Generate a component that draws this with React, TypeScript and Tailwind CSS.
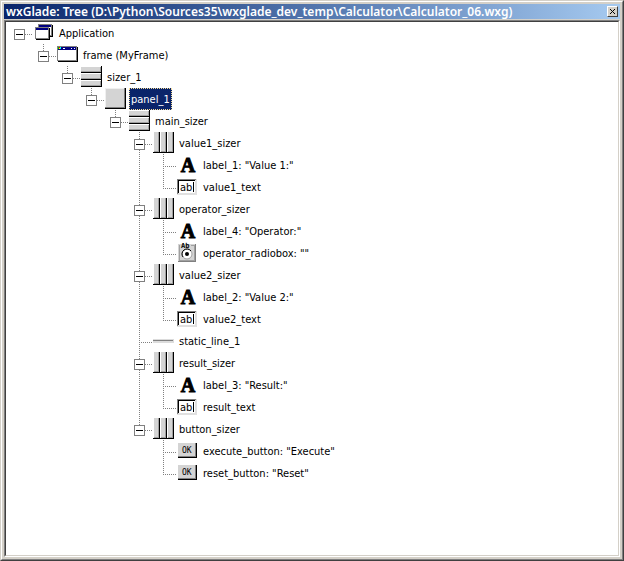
import type { ReactNode } from "react";

type IconKind =
  | "app"
  | "frame"
  | "vsizer"
  | "hsizer"
  | "panel"
  | "label"
  | "text"
  | "radio"
  | "line"
  | "button";

interface TreeNode {
  name: string;
  icon: IconKind;
  selected?: boolean;
  children?: TreeNode[];
}

const tree: TreeNode = {
  name: "Application",
  icon: "app",
  children: [
    {
      name: "frame (MyFrame)",
      icon: "frame",
      children: [
        {
          name: "sizer_1",
          icon: "vsizer",
          children: [
            {
              name: "panel_1",
              icon: "panel",
              selected: true,
              children: [
                {
                  name: "main_sizer",
                  icon: "vsizer",
                  children: [
                    {
                      name: "value1_sizer",
                      icon: "hsizer",
                      children: [
                        { name: 'label_1: "Value 1:"', icon: "label" },
                        { name: "value1_text", icon: "text" },
                      ],
                    },
                    {
                      name: "operator_sizer",
                      icon: "hsizer",
                      children: [
                        { name: 'label_4: "Operator:"', icon: "label" },
                        { name: 'operator_radiobox: ""', icon: "radio" },
                      ],
                    },
                    {
                      name: "value2_sizer",
                      icon: "hsizer",
                      children: [
                        { name: 'label_2: "Value 2:"', icon: "label" },
                        { name: "value2_text", icon: "text" },
                      ],
                    },
                    { name: "static_line_1", icon: "line" },
                    {
                      name: "result_sizer",
                      icon: "hsizer",
                      children: [
                        { name: 'label_3: "Result:"', icon: "label" },
                        { name: "result_text", icon: "text" },
                      ],
                    },
                    {
                      name: "button_sizer",
                      icon: "hsizer",
                      children: [
                        { name: 'execute_button: "Execute"', icon: "button" },
                        { name: 'reset_button: "Reset"', icon: "button" },
                      ],
                    },
                  ],
                },
              ],
            },
          ],
        },
      ],
    },
  ],
};

function MiniWindow({ x, y }: { x: number; y: number }) {
  return (
    <g transform={`translate(${x} ${y})`}>
      <rect x="1" y="1" width="14" height="12" fill="#000" />
      <rect width="14" height="12" fill="#808080" />
      <rect x="1" y="1" width="12" height="10" fill="#fff" />
      <rect x="1" y="1" width="12" height="2" fill="#000080" />
    </g>
  );
}

const drawings: Record<IconKind, ReactNode> = {
  app: (
    <>
      <MiniWindow x={5} y={2} />
      <MiniWindow x={2} y={5} />
    </>
  ),
  frame: (
    <>
      <rect x="1" y="3" width="20" height="15" fill="#000" />
      <rect x="0" y="2" width="20" height="15" fill="#808080" />
      <rect x="1" y="3" width="18" height="13" fill="#fff" />
      <rect x="1" y="3" width="18" height="3" fill="#000080" />
      <rect x="1" y="3" width="1" height="2" fill="#00c000" />
      <rect x="2" y="3" width="1" height="1" fill="#ff0000" />
      <rect x="2" y="4" width="1" height="1" fill="#ffff00" />
      <rect x="3" y="3" width="1" height="2" fill="#00ffff" />
      <rect x="6" y="4" width="2" height="1" fill="#fff" />
      <rect x="14" y="4" width="1" height="1" fill="#fff" />
      <rect x="17" y="4" width="1" height="1" fill="#fff" />
    </>
  ),
  vsizer: (
    <>
      {[0, 7, 14].map((y) => (
        <g key={y} transform={`translate(0 ${y})`}>
          <rect width="21" height="7" fill="#000" />
          <rect width="20" height="6" fill="#a0a0a0" />
          <rect width="19" height="5" fill="#d4d4d4" />
          <rect width="20" height="1" fill="#fff" />
        </g>
      ))}
    </>
  ),
  hsizer: (
    <>
      {[0, 7, 14].map((x) => (
        <g key={x} transform={`translate(${x} 0)`}>
          <rect width="7" height="21" fill="#000" />
          <rect width="6" height="20" fill="#a0a0a0" />
          <rect width="5" height="19" fill="#d4d4d4" />
          <rect width="1" height="20" fill="#fff" />
        </g>
      ))}
    </>
  ),
  panel: (
    <>
      <rect width="21" height="21" fill="#000" />
      <rect width="20" height="20" fill="#808080" />
      <rect width="19" height="19" fill="#f0f0f0" />
      <rect x="1" y="1" width="18" height="18" fill="#d4d4d4" />
    </>
  ),
  label: (
    <text
      x="11"
      y="18"
      textAnchor="middle"
      stroke="#000"
      strokeWidth="1"
      className="font-['Liberation_Serif',serif] text-[20px] font-bold"
    >
      A
    </text>
  ),
  text: (
    <>
      <rect x="0" y="3" width="20" height="16" fill="#e0e0e0" />
      <path d="M0 18V3h19v1H1v14z" fill="#808080" />
      <rect x="1" y="4" width="17" height="13" fill="#000" />
      <rect x="2" y="5" width="16" height="12" fill="#fff" />
      <text x="3" y="15" className="font-['DejaVu_Sans_Condensed','DejaVu_Sans',sans-serif] text-[11px]">
        ab
      </text>
      <rect x="16" y="6" width="1" height="10" fill="#000" />
    </>
  ),
  radio: (
    <>
      <rect x="1" y="2" width="18" height="18" fill="#808080" />
      <rect x="1" y="2" width="17" height="17" fill="#d4d4d4" />
      <path d="M3 3H2v15h15V3h-3" fill="none" stroke="#a0a0a0" />
      <text x="4" y="6" className="font-['DejaVu_Sans_Mono',monospace] text-[7px] font-bold">
        Ab
      </text>
      <g shapeRendering="auto">
        <circle cx="10" cy="12" r="5" fill="#fff" stroke="#a0a0a0" />
        <path d="M6 15A5 5 0 0 1 14 9" fill="none" stroke="#000" />
        <circle cx="10" cy="12" r="2" fill="#000" />
      </g>
    </>
  ),
  line: (
    <>
      <rect y="9" width="21" height="4" fill="#dcdcdc" />
      <rect y="10" width="20" height="1" fill="#808080" />
    </>
  ),
  button: (
    <>
      <rect x="1" y="3" width="19" height="15" fill="#000" />
      <rect x="1" y="3" width="18" height="14" fill="#808080" />
      <rect x="1" y="3" width="17" height="13" fill="#d4d4d4" />
      <text x="5" y="13" className="font-['DejaVu_Sans_Mono',monospace] text-[8px]">
        OK
      </text>
    </>
  ),
};

function Guide({ d, className }: { d: string; className: string }) {
  return (
    <svg
      aria-hidden="true"
      className={`h-[22px] shrink-0 ${className}`}
      fill="none"
      stroke="#808080"
      strokeDasharray="1 1"
      shapeRendering="crispEdges"
    >
      <path d={d} />
    </svg>
  );
}

interface ItemProps {
  node: TreeNode;
  trail: boolean[];
  last: boolean;
}

function TreeItem({ node, trail, last }: ItemProps) {
  const root = trail.length === 0 && node.icon === "app";
  const vertical = root ? "" : last ? "M12.500 0V12" : "M12.500 0V22";
  return (
    <li role="treeitem" aria-expanded={node.children ? true : undefined} aria-selected={!!node.selected}>
      <div className="flex h-[22px] items-center">
        {trail.map((open, i) => (
          <Guide key={i} className="w-6" d={open ? "M12.500 0V22" : ""} />
        ))}
        <div className="grid shrink-0">
          <Guide className="col-start-1 row-start-1 w-[26px]" d={`${vertical}M12 12.500H26`} />
          {node.children && (
            <button
              type="button"
              aria-label={`Collapse ${node.name}`}
              className="col-start-1 row-start-1 mt-[7px] ml-[7px] grid size-[11px] place-items-center border border-[#808080] bg-white"
            >
              <span className="h-px w-[7px] bg-black" />
            </button>
          )}
        </div>
        <svg aria-hidden="true" className="size-[22px] shrink-0" shapeRendering="crispEdges">
          {drawings[node.icon]}
        </svg>
        <span
          className={`ml-[2px] h-[22px] border px-px leading-[21px] whitespace-nowrap ${
            node.selected ? "border-dotted border-[#f5db95] bg-[#0a246a] text-white" : "border-transparent"
          }`}
        >
          {node.name}
        </span>
      </div>
      {node.children && (
        <ul role="group">
          {node.children.map((child, i) => (
            <TreeItem
              key={child.name}
              node={child}
              trail={root ? [false] : [...trail, !last]}
              last={i === node.children!.length - 1}
            />
          ))}
        </ul>
      )}
    </li>
  );
}

export default function App() {
  return (
    <div className="flex min-h-screen flex-col border border-t-[#d4d0c8] border-r-[#404040] border-b-[#404040] border-l-[#d4d0c8] font-['DejaVu_Sans_Condensed','DejaVu_Sans',sans-serif] text-[11px] text-black">
      <div className="flex flex-1 flex-col border border-t-white border-r-[#808080] border-b-[#808080] border-l-white bg-[#d4d0c8] p-[2px]">
        <header className="flex h-[15px] items-center justify-between bg-linear-to-r from-[#0a246a] to-[#a6caf0] px-[2px]">
          <h1 className="font-['Noto_Sans',sans-serif] text-[12px] leading-[15px] font-semibold whitespace-nowrap text-white">
            wxGlade: Tree (D:\Python\Sources35\wxglade_dev_temp\Calculator\Calculator_06.wxg)
          </h1>
          <button
            type="button"
            aria-label="Close"
            className="grid size-[11px] place-items-center border border-t-white border-r-[#404040] border-b-[#404040] border-l-white bg-[#d4d0c8]"
          >
            <svg
              aria-hidden="true"
              className="size-[5px]"
              viewBox="0 0 5 5"
              stroke="#000"
              shapeRendering="crispEdges"
            >
              <path d="M0 .5h1M4 .5h1M1 1.500h1M3 1.500h1M2 2.500h1M1 3.500h1M3 3.500h1M0 4.500h1M4 4.500h1" />
            </svg>
          </button>
        </header>
        <main className="mt-px flex flex-1 flex-col border border-t-[#808080] border-r-white border-b-white border-l-[#808080]">
          <div className="flex-1 border border-t-[#404040] border-r-[#d4d0c8] border-b-[#d4d0c8] border-l-[#404040] bg-white pl-px">
            <ul role="tree" aria-label="Widget tree">
              <TreeItem node={tree} trail={[]} last />
            </ul>
          </div>
        </main>
      </div>
    </div>
  );
}
